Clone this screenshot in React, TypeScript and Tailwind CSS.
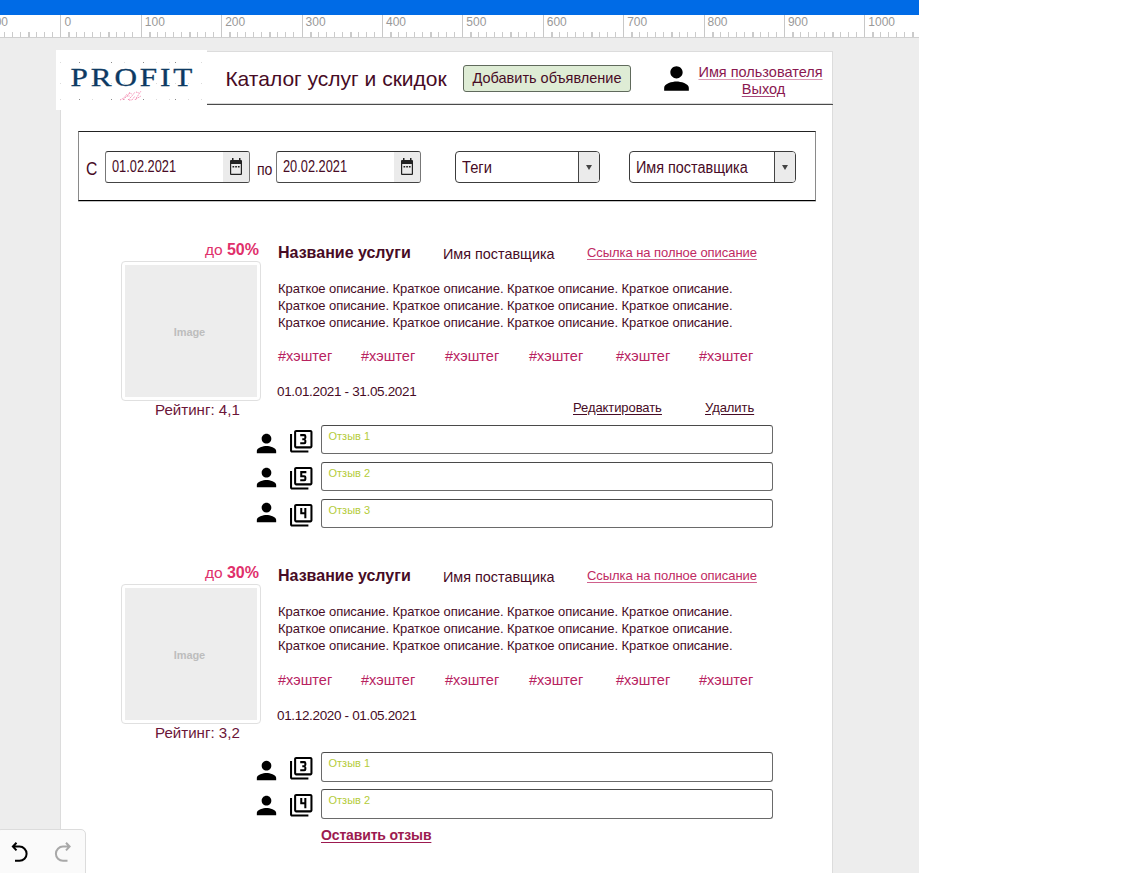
import type { ReactNode } from "react";
import { MdPerson, MdFilter3, MdFilter4, MdFilter5 } from "react-icons/md";

const RULER = [-100, 0, 100, 200, 300, 400, 500, 600, 700, 800, 900, 1000];

function Ruler() {
  return (
    <div className="flex h-[23px] w-full shrink-0 overflow-hidden border-b border-[#cfcfcf] bg-white">
      <div className="-ml-[20px] flex">
        {RULER.map((n) => (
          <div key={n} className="flex w-[80.4px] shrink-0 flex-col border-l border-[#c8c8c8]">
            <span className="h-[17px] pl-[3px] text-[12px] leading-[15px] text-[#999]">{n}</span>
            <svg width="80" height="5" className="block shrink-0">
              {[1, 2, 3, 4, 5, 6, 7, 8, 9].map((t) => (
                <rect key={t} x={Math.round(t * 8.05) - 1} y="0" width={t === 1 || t === 6 ? 2 : 1} height="5" fill="#cbcbcb" />
              ))}
            </svg>
          </div>
        ))}
      </div>
    </div>
  );
}

function Logo() {
  const xs = [4, 23, 36, 55, 68, 87, 100, 113, 119, 132, 145];
  return (
    <svg width="151" height="60" viewBox="0 0 151 60" className="relative block shrink-0">
      <rect width="151" height="60" fill="#fff" />
      {[12, 33, 49].map((y) =>
        xs.map((x, i) => <rect key={`${x}-${y}`} x={x} y={y} width="1" height="1" fill={y !== 33 && [1, 3, 5, 8].includes(i) ? "#8c8c8c" : "#dcdcdc"} />),
      )}
      <text transform="translate(14.500 36) scale(1.2 1)" fontFamily="Liberation Serif, serif" fontSize="26" letterSpacing="2.4" fill="#0d3a63" stroke="#0d3a63" strokeWidth="0.3">
        PROFIT
      </text>
      <path
        d="M64 50l4-2 3-4m-4 6l5-5 2-3m-2 8l4-4 3-4m-6 8h3l3-4m0 4l4-6 2-3m-5 8l5-3m-12-3l3 1m4-2l3 1m-12 3h3"
        fill="none" stroke="#f58db2" strokeWidth="1" strokeDasharray="1.5 1"
      />
    </svg>
  );
}

function Header() {
  return (
    <header className="-ml-[5px] -mt-[2px] flex h-[55px] items-start">
      <Logo />
      <div className="mt-px flex h-[54px] w-[626px] shrink-0 items-start border-b border-[#4a4a4a] border-t border-t-[#dcdcdc] shadow-[inset_0_-1px_0_#d9d9d9]">
        <h1 className="ml-[18px] mt-[13px] w-[238px] whitespace-nowrap pl-[0.4px] text-[21px] leading-[28px] text-[#470b25]">Каталог услуг и скидок</h1>
        <button className="mt-[13px] h-[27px] w-[168px] whitespace-nowrap rounded-[3px] border border-[#606a5c] bg-[#deecd5] text-center text-[14.5px] leading-[23px] text-[#470b25]">
          Добавить объявление
        </button>
        <MdPerson size={37} className="ml-[27px] mt-[7.500px] shrink-0 text-black" />
        <div className="ml-[3.500px] mt-[12px] flex w-[124px] flex-col items-center whitespace-nowrap text-[14.5px] leading-[17px] text-[#8a1850] underline-offset-2">
          <a className="underline decoration-[#d99ab5]">Имя пользователя</a>
          <a className="ml-[6px] underline decoration-[#a8487a]">Выход</a>
        </div>
      </div>
    </header>
  );
}

function DateInput({ value }: { value: string }) {
  return (
    <div className="flex h-[32px] w-[145px] shrink-0 overflow-hidden rounded-[3px] border border-[#777] border-t-[#333] border-b-[#444]">
      <div className="w-[117px] pl-[6px]">
        <span className="inline-block origin-left scale-x-[0.8] whitespace-nowrap text-[16px] leading-[30px]">{value}</span>
      </div>
      <div className="flex grow items-center justify-center bg-[#ebebeb]">
        <svg width="14" height="18" viewBox="0 0 14 18" className="mr-px">
          <path d="M3 0h1.500v2H10V0h1.500v2H12q1 0 1 1v13q0 1-1 1H2q-1 0-1-1V3q0-1 1-1h1zM2.200 6v9.800h9.600V6z" fill="#222" fillRule="evenodd" />
          <path d="M3.500 8h1.700v1.600H3.500zM6.200 8h1.700v1.600H6.200zM8.900 8h1.700v1.600H8.900z" fill="#222" />
        </svg>
      </div>
    </div>
  );
}

function Arrow() {
  return (
    <div className="flex w-[21px] shrink-0 items-center justify-center border-l border-[#444] bg-[#ebebeb]">
      <svg width="6" height="5" viewBox="0 0 6 5"><path d="M0 0h6L3 5z" fill="#444" /></svg>
    </div>
  );
}

function Filters() {
  return (
    <section className="ml-[17px] mt-[26px] flex h-[70px] w-[738px] items-start border border-[#8a8a8a] border-b-black border-t-[#222] pt-[19px] text-[#470b25] shadow-[0_1px_0_#c4c4c4]">
      <span className="ml-[7px] mt-[8px] w-[19px] text-[18px] leading-[20px]">
        <span className="inline-block origin-left scale-x-[0.87]">С</span>
      </span>
      <DateInput value="01.02.2021" />
      <span className="ml-[7px] mt-[9px] w-[19px] text-[16px] leading-[20px]">
        <span className="inline-block origin-left scale-x-[0.88]">по</span>
      </span>
      <DateInput value="20.02.2021" />
      <div className="ml-[34px] flex h-[32px] w-[145px] shrink-0 overflow-hidden rounded-[4px] border border-[#3c3c3c]">
        <div className="grow pl-[6px]">
          <span className="inline-block origin-left scale-x-[0.92] whitespace-nowrap text-[16px] leading-[31px]">Теги</span>
        </div>
        <Arrow />
      </div>
      <div className="ml-[29px] flex h-[32px] w-[167px] shrink-0 overflow-hidden rounded-[4px] border border-[#3c3c3c]">
        <div className="w-[144px] shrink-0 pl-[6px]">
          <span className="inline-block origin-left scale-x-[0.9] whitespace-nowrap text-[16px] leading-[31px]">Имя поставщика</span>
        </div>
        <Arrow />
      </div>
    </section>
  );
}

const DESC = "Краткое описание. Краткое описание. Краткое описание. Краткое описание.";

function Card({ discount, rating, dates, editable, children }: { discount: string; rating: string; dates: string; editable?: boolean; children: ReactNode }) {
  return (
    <article className="h-[323px]">
      <div className="flex h-[185px]">
        <div className="ml-[60px] w-[140px] shrink-0">
          <p className="h-[21px] whitespace-nowrap pr-[2px] text-right text-[15.500px] leading-[20px] text-[#e0306b]">
            до <b className="text-[16px]">{discount}</b>
          </p>
          <div className="h-[140px] rounded-[4px] border border-[#e0e0e0] p-[3px]">
            <div className="flex h-full items-center justify-center bg-[#ededed] pr-[3px] pt-[2px] text-[11px] font-bold tracking-[-0.1px] text-[#bdbdbd]">Image</div>
          </div>
          <p className="-mt-px whitespace-nowrap pl-[34px] text-[15.100px] leading-[20px] text-[#6b1638]">Рейтинг: {rating}</p>
        </div>
        <div className="ml-[17px] w-[500px] text-[#470b25]">
          <div className="flex h-[40px] items-start whitespace-nowrap pt-[3px] leading-[20px]">
            <h2 className="w-[165px] text-[16px] font-bold">Название услуги</h2>
            <span className="mt-px w-[144px] text-[14.400px]">Имя поставщика</span>
            <a className="text-[13px] tracking-[-0.06px] text-[#c02a62] underline decoration-[#d0608c] underline-offset-2">Ссылка на полное описание</a>
          </div>
          <p className="w-[480px] whitespace-pre-line text-[13px] leading-[17px] tracking-[-0.07px]">{`${DESC}\n${DESC}\n${DESC}`}</p>
          <div className={`flex text-[14.500px] leading-[20px] text-[#b8235f] ${editable ? "mt-[15px]" : "mt-[16px]"}`}>
            {["w-[83px]", "w-[84px]", "w-[84px]", "w-[87px]", "w-[83px]", "w-[60px]"].map((w, i) => (
              <span key={i} className={w}>#хэштег</span>
            ))}
          </div>
          <p className="-ml-px mt-[16px] text-[13.500px] leading-[20px] tracking-[-0.34px]">{dates}</p>
          {editable && (
            <div className="-mt-[4px] flex pl-[295px] text-[13px] leading-[20px] tracking-[-0.08px] text-[#470b25] underline underline-offset-2">
              <a className="w-[132px]">Редактировать</a>
              <a>Удалить</a>
            </div>
          )}
        </div>
      </div>
      {children}
    </article>
  );
}

const MARKS = { 3: MdFilter3, 4: MdFilter4, 5: MdFilter5 };

function Reviews({ marks, children, tall }: { marks: (3 | 4 | 5)[]; children?: ReactNode; tall?: boolean }) {
  return (
    <div className={`flex items-start ${tall ? "mt-[4px]" : ""}`}>
      <div className={`ml-[191px] flex w-[37px] shrink-0 flex-col gap-[6px] ${tall ? "mt-[4px]" : "mt-[3.600px]"}`}>
        {marks.map((_, i) => <MdPerson key={i} size={29} className="-mb-[0.3px] text-black" />)}
      </div>
      <div className="mt-[3.500px] flex w-[32px] shrink-0 flex-col gap-[12.500px]">
        {marks.map((m, i) => {
          const Mark = MARKS[m];
          return <Mark key={i} size={24.5} className="text-black" />;
        })}
      </div>
      <div className={`flex w-[452px] shrink-0 flex-col ${tall ? "gap-[7px]" : "gap-[8px]"}`}>
        {marks.map((_, i) => (
          <div key={i} className={`rounded-[3px] border border-[#6a6a6a] border-t-[#4a4a4a] pl-[6.500px] text-[11px] leading-[20px] text-[#b4cc3a] ${tall ? "h-[30px]" : "h-[29px]"}`}>
            Отзыв {i + 1}
          </div>
        ))}
        {children}
      </div>
    </div>
  );
}

export default function App() {
  return (
    <div className="relative h-[873px] w-[1129px] overflow-hidden bg-white font-['Liberation_Sans',Arial,sans-serif]">
      <div className="flex h-full w-[919px] flex-col overflow-hidden bg-[#ededed]">
        <div className="h-[15px] shrink-0 bg-[#006be6]" />
        <Ruler />
        <main className="ml-[60px] mt-[13px] h-[900px] w-[773px] shrink-0 border border-[#dcdcdc] bg-white">
          <Header />
          <Filters />
          <div className="mt-[39px]">
            <Card discount="50%" rating="4,1" dates="01.01.2021 - 31.05.2021" editable>
              <Reviews marks={[3, 5, 4]} />
            </Card>
            <Card discount="30%" rating="3,2" dates="01.12.2020 - 01.05.2021">
              <Reviews marks={[3, 4]} tall>
                <a className="-mt-px text-[14px] font-bold leading-[20px] tracking-[-0.15px] text-[#9c1a50] underline underline-offset-2">Оставить отзыв</a>
              </Reviews>
            </Card>
          </div>
        </main>
      </div>
      <div className="absolute -left-1 top-[829px] flex h-[50px] w-[90px] rounded-[5px] border border-[#dcdcdc] bg-[#fafafa] pl-[3px]">
        <svg width="84" height="44" viewBox="0 830 84 44" fill="none" strokeWidth="2">
          <path d="M16.500 842.800l-3.600 3.800 3.600 3.800M13 846.600h6.500a7 7 0 0 1 0 14.200h-4.500" stroke="#000" />
          <path d="M66 842.800l3.600 3.800-3.600 3.800M69.500 846.600h-6.500a7 7 0 0 0 0 14.200h4.500" stroke="#a8a8a8" />
        </svg>
      </div>
    </div>
  );
}
